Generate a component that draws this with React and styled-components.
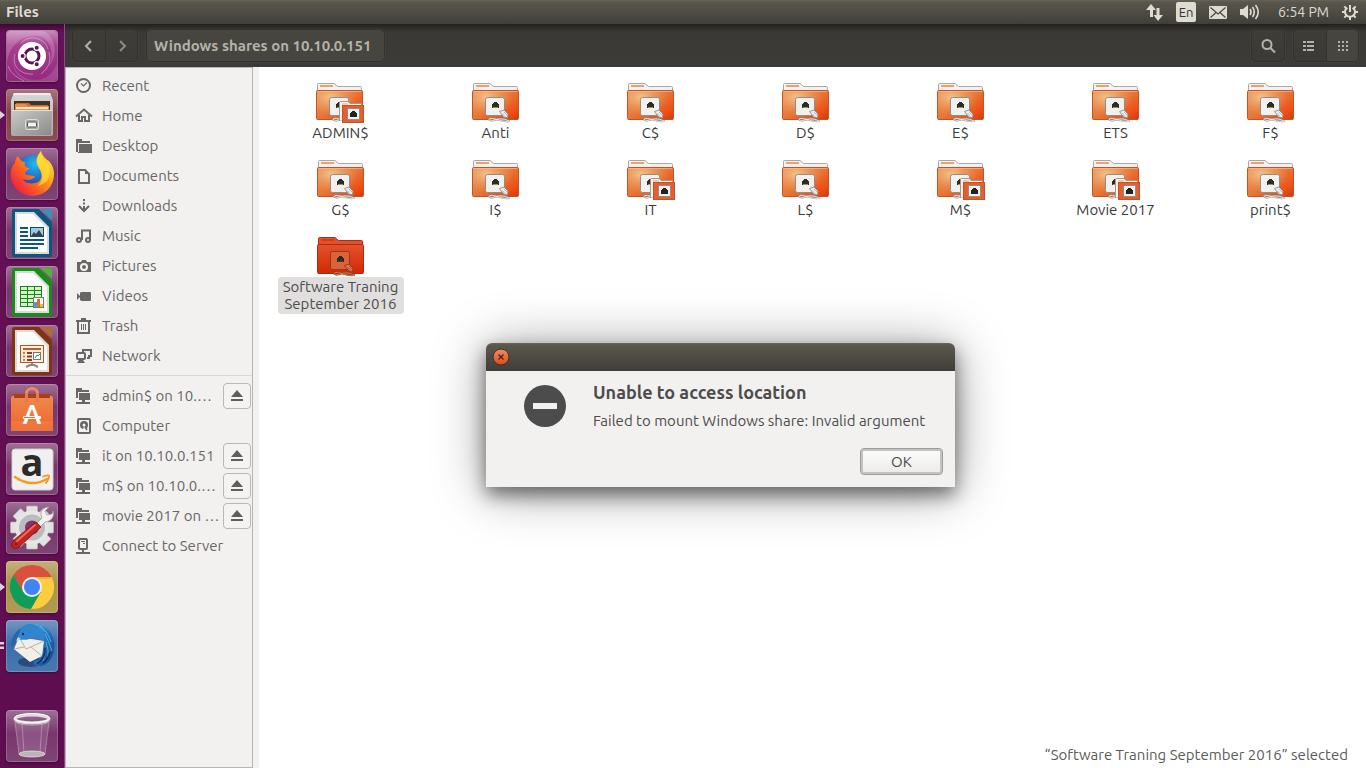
import React from "react";
import styled, { createGlobalStyle, css } from "styled-components";

const GlobalStyle = createGlobalStyle`
  *, *::before, *::after { box-sizing: border-box; }
  body { margin: 0; background: #fff; }
  body, button { font-family: Ubuntu, "Noto Sans", "Open Sans", sans-serif; font-size: 15px; line-height: 18px; }
  button { margin: 0; padding: 0; border: 0; background: none; color: inherit; cursor: pointer; }
  ul { margin: 0; padding: 0; list-style: none; }
  h1, h2, p { margin: 0; }
  svg { display: block; flex: none; overflow: visible; }
`;

/* ---------- shell ---------- */

const Desktop = styled.div`
  display: flex;
  flex-direction: column;
  min-height: 100vh;
`;

const Panel = styled.header`
  display: flex;
  align-items: center;
  height: 24px;
  padding: 0 8px 0 6px;
  color: #dfdbd2;
  background: linear-gradient(#67655a 0, #5a574d 2px, #3f3e39 100%);
`;

const AppName = styled.h1`
  font-size: 15px;
  line-height: 18px;
  font-weight: 700;
`;

const Indicators = styled.div`
  display: flex;
  align-items: center;
  gap: 13px;
  margin-left: auto;
`;

const Indicator = styled.button`
  display: flex;
  align-items: center;
`;

const Clock = styled.button`
  padding: 0 0 0 5px;
  font-size: 14px;
`;

const Keyboard = styled.button`
  width: 20px;
  height: 20px;
  border-radius: 2px;
  background: #dfdbd2;
  color: #33322d;
  font-size: 13px;
`;

const Workspace = styled.div`
  display: flex;
  flex: 1;
`;

/* ---------- launcher ---------- */

const Launcher = styled.nav`
  display: flex;
  flex-direction: column;
  gap: 7px;
  flex: none;
  width: 65px;
  padding: 6px 0 6px 6px;
  border-right: 1px solid #8c4c82;
  background: linear-gradient(#3b0a31 0, #65115a 8px, #620f52 60%, #5d0e4e 100%);
`;

const Tile = styled.button`
  position: relative;
  width: 52px;
  height: 52px;
  border-radius: 4px;
  margin-top: ${(p) => (p.$last ? "auto" : "0")};
  background: linear-gradient(rgba(255, 255, 255, 0.34), rgba(255, 255, 255, 0.08) 45%, rgba(255, 255, 255, 0.14)),
    ${(p) => p.$tint || "#6d2560"};
  box-shadow: inset 0 0 0 1px rgba(255, 255, 255, 0.2), 0 1px 2px rgba(0, 0, 0, 0.35);
`;

const RunningMark = styled.svg`
  position: absolute;
  left: -6px;
  top: 20px;
`;

/* ---------- file window ---------- */

const Window = styled.main`
  display: flex;
  flex-direction: column;
  flex: 1;
  min-width: 0;
`;

const Toolbar = styled.div`
  display: flex;
  align-items: center;
  height: 43px;
  padding: 0 7px;
  color: #b5b2a9;
  background: linear-gradient(#22211e 0, #3a3935 8px, #3c3b37 100%);
`;

const ButtonGroup = styled.div`
  display: flex;
  height: 33px;
  margin: 0 ${(p) => p.$after || 0} 0 ${(p) => p.$before || 0};
  border: 1px solid #33322e;
  border-radius: 5px;
  box-shadow: 0 0 0 1px rgba(255, 255, 255, 0.03);
  background: ${(p) => (p.$raised ? "#46453f" : "linear-gradient(#3e3d38, #3b3a36)")};
`;

const ToolButton = styled.button`
  display: grid;
  place-items: center;
  width: 32px;
  border-radius: 4px;
  & + & { border-left: 1px solid #34332f; border-radius: 0 4px 4px 0; }
  ${(p) => p.$active && css`background: #46453f;`}
  ${(p) => p.$dim && css`color: #8e8c84;`}
`;

const PathButton = styled.button`
  min-width: 237px;
  padding: 0 7px;
  font-weight: 700;
  text-align: left;
  white-space: nowrap;
`;

const Body = styled.div`
  display: flex;
  flex: 1;
`;

const Sidebar = styled.aside`
  flex: none;
  width: 188px;
  padding-top: 3px;
  border: 1px solid #b8b5b1;
  background: #f2f1f0;
`;

const PlaceList = styled.ul`
  & + & {
    margin-top: 4px;
    padding-top: 5px;
    border-top: 1px solid #dad8d5;
  }
`;

const PlaceRow = styled.li`
  display: flex;
  align-items: center;
  height: 30px;
  padding: 0 1px 0 10px;
`;

const PlaceLink = styled.a`
  display: flex;
  align-items: center;
  gap: 10px;
  flex: 1;
  min-width: 0;
  color: #686764;
  text-decoration: none;
  white-space: nowrap;
`;

const EjectButton = styled.button`
  display: grid;
  place-items: center;
  flex: none;
  width: 28px;
  height: 26px;
  border: 1px solid #bab8b4;
  border-radius: 4px;
  background: #f4f3f2;
  color: #5f5e5b;
`;

const Gutter = styled.div`
  flex: none;
  width: 6px;
  background: #f2f1f0;
`;

const Content = styled.section`
  position: relative;
  display: flex;
  flex-direction: column;
  flex: 1;
  min-width: 0;
  padding: 15px 18px 4px 4px;
  background: #fff;
`;

const ShareGrid = styled.ul`
  display: grid;
  grid-template-columns: repeat(7, 1fr);
  grid-auto-rows: 77px;
`;

const Share = styled.li`
  display: flex;
  justify-content: center;
  align-items: flex-start;
`;

const ShareButton = styled.button`
  display: flex;
  flex-direction: column;
  align-items: center;
`;

const ShareName = styled.span`
  max-width: 126px;
  padding: 1px 4px 2px;
  border-radius: 4px;
  line-height: 17px;
  color: ${(p) => (p.$selected ? "#4c4c4c" : "#3a3a3a")};
  background: ${(p) => (p.$selected ? "#e0dfde" : "transparent")};
`;

const Status = styled.p`
  margin-top: auto;
  text-align: right;
  color: #5c5b58;
`;

/* ---------- dialog ---------- */

const Dialog = styled.div`
  position: absolute;
  top: 276px;
  left: 227px;
  width: 469px;
  border-radius: 6px 6px 0 0;
  color: #4c4c4c;
  background: #f2f1f0;
  box-shadow: 0 8px 18px rgba(0, 0, 0, 0.48), 0 4px 52px rgba(0, 0, 0, 0.4);
`;

const TitleBar = styled.div`
  display: flex;
  align-items: center;
  height: 28px;
  padding-left: 6px;
  border-radius: 6px 6px 0 0;
  background: linear-gradient(#6a685d 0, #5a574d 2px, #3f3e39 100%);
`;

const Message = styled.div`
  display: grid;
  grid-template-columns: 42px 1fr;
  column-gap: 27px;
  padding: 12px 12px 0 38px;
`;

const MessageTitle = styled.h2`
  font-size: 18px;
  line-height: 18px;
  font-weight: 700;
`;

const MessageText = styled.p`
  margin-top: 11px;
  white-space: nowrap;
`;

const Actions = styled.div`
  display: flex;
  justify-content: flex-end;
  padding: 18px 12px 12px;
`;

const OkButton = styled.button`
  width: 83px;
  height: 27px;
  border: 1px solid #9f9d99;
  border-radius: 4px;
  background: linear-gradient(#fdfdfd, #ebeae8);
  box-shadow: inset 0 0 0 2px #c4c3c0;
`;

/* ---------- launcher artwork ---------- */

const Art = ({ children }) => (
  <svg width="52" height="52" viewBox="0 0 52 52" fill="none" aria-hidden="true">{children}</svg>
);

const DashArt = () => (
  <Art>
    <defs>
      <linearGradient id="dash" x1="0" y1="0" x2="0" y2="1">
        <stop offset="0" stopColor="#c888b8" /><stop offset=".3" stopColor="#a63f90" /><stop offset="1" stopColor="#95287f" />
      </linearGradient>
    </defs>
    <rect x="1" y="1" width="50" height="50" rx="3" fill="url(#dash)" />
    <path d="M1 34C2 14 20 2 36 7C46 12 49 28 42 38C53 25 50 8 38 1H4Q1 1 1 4Z" fill="#fff" opacity=".18" />
    <path d="M8 30C6 42 20 53 36 49Q46 46 51 34V48Q51 51 48 51H20C10 46 6 38 8 30Z" fill="#fff" opacity=".13" />
    <path d="M15 13C25 3 39 9 42 19M9 24C5 37 16 45 27 44M2 36Q5 45 18 51M43 22Q47 35 35 44" stroke="#f2d6ea" strokeWidth="1" opacity=".45" />
    <circle cx="26" cy="26" r="14" fill="#fff" />
    <circle cx="26" cy="26" r="7" stroke="#5e1350" strokeWidth="3" />
    <g fill="#5e1350" stroke="#fff" strokeWidth="1.2">
      <circle cx="16.6" cy="26" r="2.6" /><circle cx="30.7" cy="17.8" r="2.6" /><circle cx="30.7" cy="34.2" r="2.6" />
    </g>
  </Art>
);

const FilesArt = () => (
  <Art>
    <defs>
      <linearGradient id="cabTop" x1="0" y1="0" x2="0" y2="1"><stop offset="0" stopColor="#d7d7d5" /><stop offset="1" stopColor="#a9a9a7" /></linearGradient>
      <linearGradient id="cabFront" x1="0" y1="0" x2="1" y2="1"><stop offset="0" stopColor="#c9c9c7" /><stop offset="1" stopColor="#8b8b89" /></linearGradient>
    </defs>
    <path d="M8 4H44L47 11V45Q47 47 45 47H7Q5 47 5 45V11Z" fill="url(#cabTop)" />
    <path d="M8 4H44L45 6H7Z" fill="#eee" />
    <rect x="8" y="12" width="36" height="12" fill="#3a3532" />
    <path d="M10 14H23L25 16H42V24H10Z" fill="#d8631c" />
    <path d="M9 15H20L22 17H43V24H9Z" fill="#f08a3c" />
    <rect x="10" y="18" width="32" height="2" fill="#fbe9d6" />
    <path d="M6 21H46V24L45 46H7L6 24Z" fill="url(#cabFront)" />
    <path d="M6 21.500H46" stroke="#e4e4e2" />
    <rect x="19.500" y="30.500" width="13" height="10" rx="2" fill="#a7a7a5" stroke="#dededc" />
    <rect x="21.500" y="33" width="9" height="5" rx="1" fill="#f3f3f1" stroke="#555" />
  </Art>
);

const FirefoxArt = () => (
  <Art>
    <defs>
      <linearGradient id="ffBody" x1="1" y1="0" x2="0.1" y2="0.8">
        <stop offset="0" stopColor="#fff44f" /><stop offset=".35" stopColor="#ffb41c" /><stop offset=".65" stopColor="#ff6a1f" /><stop offset="1" stopColor="#f0243f" />
      </linearGradient>
      <radialGradient id="ffGlobe" cx=".6" cy=".3" r=".8"><stop offset="0" stopColor="#25b8f6" /><stop offset="1" stopColor="#1b3fa5" /></radialGradient>
    </defs>
    <circle cx="26" cy="22" r="15" fill="url(#ffGlobe)" />
    <path d="M35 3C31 8 29 14 33 20C36 25 37 31 32 34C26 37 18 35 17 31C21 33 26 32 29 29C28 27 22 28 19 26C18 24 22 22 24 20C20 20 18 18 19 14C16 14 14 12 12 8C10 10 9 12 9 15C4 20 3 28 7 36C12 45 20 48 27 48C40 47 48 38 48 26C48 19 45 16 43 13C41 12 36 8 35 3Z" fill="url(#ffBody)" />
    <path d="M35 3C30 9 29 14 33 20C38 26 37 34 31 38C41 37 46 28 43 18C40 14 35 9 35 3Z" fill="#ffe63a" opacity=".7" />
  </Art>
);

const OfficeArt = ({ frame, light, children }) => (
  <Art>
    <path d="M8 2H33L46 15V48Q46 50 44 50H8Q6 50 6 48V4Q6 2 8 2Z" fill={frame} />
    <path d="M35 2H44Q46 2 46 4V13Z" fill={light} />
    <path d="M9 5H28L43 20V47H9Z" fill="#d9dadb" />
    <path d="M11 7H27L41 21V45H11Z" fill="#fbfbfa" />
    {children}
  </Art>
);

const WriterArt = () => (
  <OfficeArt frame="#0d5680" light="#3b8fb9">
    <path d="M14 21H22M14 25H22M14 29H22M14 33H38M14 37H38M14 41H32" stroke="#0b5684" strokeWidth="2" />
    <rect x="24.500" y="20.500" width="13" height="9" fill="#9dcbe6" stroke="#0d4a70" />
    <path d="M25 29L28 25L30 27L33 23L37 29Z" fill="#35434a" /><circle cx="35" cy="23" r="1" fill="#f4c542" />
  </OfficeArt>
);

const CalcArt = () => (
  <OfficeArt frame="#178e15" light="#52b13f">
    <rect x="14" y="20" width="22" height="21" fill="#18841a" />
    <g fill="#d3f5c6">
      {[0, 1, 2, 3, 4].map((r) => [0, 1, 2].map((c) => (
        <rect key={`${r}-${c}`} x={15 + c * 7} y={21 + r * 4} width="6" height="3" />
      )))}
    </g>
    <rect x="27.500" y="31.500" width="10" height="10" fill="#fff" stroke="#777" />
    <path d="M28 36H31V41H28Z" fill="#3da3dd" /><path d="M31 33H34V41H31Z" fill="#e66a24" /><path d="M34 38H37V41H34Z" fill="#eec31d" />
  </OfficeArt>
);

const ImpressArt = () => (
  <OfficeArt frame="#843310" light="#b46a35">
    <rect x="14.500" y="20.500" width="23" height="17" fill="#fbeee4" stroke="#bd5319" />
    <path d="M17 24H35" stroke="#c65c1e" strokeWidth="2" />
    <path d="M17 28H19M17 31.500H19M17 35H19" stroke="#e07d3c" strokeWidth="2" />
    <path d="M21 28H26M21 31.500H26M21 35H26" stroke="#913c11" strokeWidth="2" />
    <rect x="27.500" y="27.500" width="7" height="7" fill="#fff" stroke="#777" />
    <path d="M29 33L31 30L32 31L34 29" stroke="#31962f" />
    <path d="M26 38V41M26 39L20 42M26 39L32 42" stroke="#8a8a8a" strokeWidth="2" />
  </OfficeArt>
);

const SoftwareArt = () => (
  <Art>
    <defs><linearGradient id="bag" x1="0" y1="0" x2="0" y2="1"><stop offset="0" stopColor="#ef8a4f" /><stop offset="1" stopColor="#ef6425" /></linearGradient></defs>
    <path d="M7 10H45L47 13V17H5V13Z" fill="#a93f18" />
    <path d="M5 13L8 11V14H44V11L47 13V47H5Z" fill="url(#bag)" />
    <path d="M5 37H47V47H5Z" fill="#fff" opacity=".08" />
    <path d="M20.500 18V10Q20.500 5 26 5Q31.500 5 31.500 10V18" stroke="#e7794e" strokeWidth="3" />
    <path d="M20 9Q21 4 26 4Q31 4 32 9" stroke="#f6a37f" strokeWidth="1" />
    <text x="26" y="40" textAnchor="middle" fontFamily="Lato, sans-serif" fontWeight="700" fontSize="26" fill="#fff">A</text>
    <rect x="17" y="32" width="18" height="3" rx="1" fill="#fff" /><rect x="18" y="33" width="11" height="1" fill="#ef6a2a" />
  </Art>
);

const AmazonArt = () => (
  <Art>
    <rect x="6" y="6" width="41" height="41" rx="3" fill="#f0f0f0" stroke="#cfcfcf" />
    <text x="26" y="33" textAnchor="middle" fontFamily="Open Sans, sans-serif" fontWeight="700" fontSize="38" fill="#2b2b2b">a</text>
    <path d="M9 34Q25 45 41 36" stroke="#f79a1c" strokeWidth="2.500" strokeLinecap="round" />
    <path d="M37 33.500Q44 31 43 34Q42 38 40 40" stroke="#f79a1c" strokeWidth="1.800" strokeLinecap="round" />
  </Art>
);

const SettingsArt = () => (
  <Art>
    {[0, 45, 90, 135].map((a) => (
      <rect key={a} x="20.500" y="4" width="11" height="43" rx="1" fill="#e2e2e1" stroke="#b3b3b2" strokeWidth=".7" transform={`rotate(${a} 26 25.500)`} />
    ))}
    <circle cx="26" cy="25.500" r="17" fill="#e6e6e5" />
    <circle cx="26" cy="25.500" r="13" fill="#bdbcbc" />
    <circle cx="26" cy="25.500" r="7" fill="#7b3570" />
    <path d="M30 22L36 16C33 10 37 5 43 5L39 9L41 13L46 12L47 9C49 14 45 20 39 20L33 26Z" fill="#f1f1f0" stroke="#9c9c9b" strokeWidth=".8" />
    <path d="M30 20L35 25L13 45Q9 48 6 45Q4 42 8 38Z" fill="#c8241f" stroke="#80100f" strokeWidth=".8" />
    <path d="M29 23L11 39" stroke="#f06a60" strokeWidth="2" strokeLinecap="round" />
    <circle cx="10" cy="42" r="1.500" fill="#7a2620" />
  </Art>
);

const ChromeArt = () => (
  <Art>
    <path d="M7.500 14A22 22 0 0 1 45.600 16H26L17.300 31Z" fill="#db4f3f" />
    <path d="M45.600 16A22 22 0 0 1 24.900 48L34.700 31L26 16Z" fill="#fecd3e" />
    <path d="M24.900 48A22 22 0 0 1 7.500 14L17.300 31H34.700Z" fill="#109d59" />
    <path d="M26 16H45.600L44 18H30Z" fill="#c58f1c" opacity=".35" />
    <circle cx="26" cy="26" r="10" fill="#f1f1f1" /><circle cx="26" cy="26" r="8" fill="#4384f3" />
  </Art>
);

const ThunderbirdArt = () => (
  <Art>
    <defs><linearGradient id="tb" x1="0" y1="0" x2="1" y2="1"><stop offset="0" stopColor="#5fb2e9" /><stop offset=".5" stopColor="#1f73bd" /><stop offset="1" stopColor="#123d7c" /></linearGradient></defs>
    <ellipse cx="25" cy="42" rx="13" ry="5" fill="#123256" opacity=".6" />
    <path d="M30 4C42 5 50 16 48 29C47 40 40 46 33 46C28 46 27 44 28 41C33 40 36 37 37 32L38 22L26 8Z" fill="url(#tb)" />
    <path d="M8 29L13 17L38 21L36 36L24 42Z" fill="#f2efe9" />
    <path d="M13 17L20 29L38 21M8 29L18 27M36 36L25 27" stroke="#b8b2a8" strokeWidth="1" />
    <path d="M12 20C10 11 15 5 23 4C31 3 38 9 39 22C34 17 29 16 25 18C21 21 16 19 12 20Z" fill="#2f86cf" />
    <path d="M6 29C4 20 8 12 15 8C13 13 12 16 11 20C9 23 7 26 6 29Z" fill="#2567ab" />
    <path d="M34 6Q42 12 45 22M39 14Q43 22 46 31M40 22Q43 30 42 38M39 28Q40 34 37 41" stroke="#79bff0" strokeWidth="1" opacity=".7" />
    <path d="M39 28Q40 38 31 44M44 32Q42 40 37 43" stroke="#0f2f63" strokeWidth="1.500" />
    <circle cx="17" cy="14" r="1.200" fill="#0e2c52" /><path d="M12 17L10 21L15 19Z" fill="#cfd5da" />
  </Art>
);

const TrashArt = () => (
  <Art>
    <path d="M9 11L13 44Q26 50 39 44L43 11Q26 17 9 11Z" fill="#fff" opacity=".14" />
    <path d="M9 12L13 44M43 12L39 44M16 14L18 43M36 14L34 43" stroke="#fff" strokeWidth="1" opacity=".3" />
    <ellipse cx="26" cy="44" rx="13" ry="3" fill="#b9b7b6" stroke="#e9e8e7" strokeWidth=".7" />
    <ellipse cx="26" cy="9" rx="17" ry="4" stroke="#dddcdb" strokeWidth="3" />
    <ellipse cx="26" cy="8" rx="17.500" ry="4.500" stroke="#fff" strokeWidth="1" />
    <path d="M8 10Q9 15 26 15Q43 15 44 10" stroke="#a9a8a7" strokeWidth="1" />
  </Art>
);

/* ---------- symbolic icons, drawn on a 16px grid ---------- */

const Glyph = ({ children }) => (
  <svg width="16" height="16" viewBox="0 0 16 16" fill="none" stroke="none" aria-hidden="true">{children}</svg>
);

const line = { stroke: "currentColor", strokeWidth: 2 };
const fill = { fill: "currentColor" };

const glyphs = {
  recent: <><circle cx="7.500" cy="7.500" r="6.500" {...line} /><path d="M5 5.500L7.500 8L11 4.500" stroke="currentColor" strokeWidth="1.200" /></>,
  home: <><path d="M0 8.500L8 1.500L16 8.500" {...line} /><path d="M3 7V13H6V9H9V13H13V7" {...line} /></>,
  desktop: <path d="M0 1H6V3H14V5H2V14H0ZM3 6H16V15H2V14H3Z" {...fill} />,
  documents: <><path d="M3 2H9L13 6V15H3Z" {...line} /><path d="M9 2V6H13Z" {...fill} /></>,
  downloads: <><path d="M7 1H9V3H7ZM7 4.500H9V6.500H7Z" {...fill} /><path d="M8 8V13M3 8L8 13L13 8" {...line} /></>,
  music: <><circle cx="3" cy="12" r="2" {...line} /><circle cx="12" cy="12" r="2" {...line} /><path d="M6 12V2.500H14V12" {...line} /></>,
  pictures: <path fillRule="evenodd" d="M1 4H5L6 2H10L11 4H15V14H1ZM8 5A4 4 0 1 0 8 13A4 4 0 1 0 8 5ZM8 7A2 2 0 1 1 8 11A2 2 0 1 1 8 7Z" {...fill} />,
  videos: <path d="M1 5L4 8V5Q4 4 6 4H14Q15 4 15 5V12Q15 13 14 13H6Q5 13 4 12V9L1 12Z" {...fill} />,
  trash: <><path d="M0 3H15M5 1H10M2 4V15H13V4" {...line} /><path d="M5.500 6V12M7.500 6V12M9.500 6V12" stroke="currentColor" /></>,
  network: <><path d="M7 4V2H15V8H12" {...line} /><rect x="1" y="5" width="8" height="6" rx="1" {...line} /><path d="M3 12H7L9 15H1ZM11 9H14V11H11Z" {...fill} /></>,
  remote: <path d="M0 0H6V2H13V4H2V10H0ZM3 5H14V12H3ZM6 12H9V14H14V16H0V14H6Z" {...fill} />,
  computer: <><rect x="2" y="1" width="12" height="14" rx="1" {...line} /><circle cx="8" cy="7" r="4" {...fill} /><circle cx="8" cy="7" r="1.500" fill="#f2f1f0" /><path d="M8 8L11 12H7Z" fill="#f2f1f0" /><path d="M9 9L11 12" stroke="currentColor" strokeWidth="1.500" /></>,
  server: <><rect x="3" y="1" width="8" height="10" rx="1" {...line} /><path d="M5 3.500H9M7 5.500H9" stroke="currentColor" /><path d="M6 12H8V14H14V16H0V14H6Z" {...fill} /></>,
  eject: <path d="M8 2L14 9H2ZM2 11H14V13H2Z" {...fill} />,
  back: <path d="M10 3L5 8L10 13" {...line} />,
  forward: <path d="M6 3L11 8L6 13" {...line} />,
  search: <><circle cx="7" cy="6.500" r="4.500" {...line} /><path d="M10 9.500L15 14.500" {...line} /></>,
  list: <path d="M1 3H4V5H1ZM1 7H4V9H1ZM1 11H4V13H1ZM5 3H12V5H5ZM5 7H12V9H5ZM5 11H12V13H5Z" {...fill} />,
  icons: <path d="M3 3h2v2H3zM7 3h2v2H7zM11 3h2v2h-2zM3 7h2v2H3zM7 7h2v2H7zM11 7h2v2h-2zM3 11h2v2H3zM7 11h2v2H7zM11 11h2v2h-2z" {...fill} />,
};

const Traffic = () => (
  <svg width="17" height="17" viewBox="0 0 17 17" fill="currentColor" aria-hidden="true">
    <path d="M5 0L10 6H7V13H4V6H0ZM12 17L7.500 11H10.500V4H13.500V11H17Z" />
  </svg>
);
const Mail = () => (
  <svg width="18" height="13" viewBox="0 0 18 13" aria-hidden="true">
    <rect width="18" height="13" rx="1" fill="currentColor" />
    <path d="M1.500 1.500L9 8L16.500 1.500M1.500 11.500L7 6.500M16.500 11.500L11 6.500" fill="none" stroke="#4a4841" strokeWidth="1.200" />
  </svg>
);
const Volume = () => (
  <svg width="20" height="16" viewBox="0 0 20 16" fill="none" aria-hidden="true">
    <path d="M0 5H3L8 1V15L3 11H0Z" fill="currentColor" />
    <path d="M10 5Q12 8 10 11M12.500 3Q16 8 12.500 13M15.500 1Q21 8 15.500 15" stroke="currentColor" strokeWidth="1.600" />
  </svg>
);
const Session = () => (
  <svg width="16" height="16" viewBox="0 0 16 16" fill="none" aria-hidden="true">
    {[45, 90, 135, 180, 225, 270, 315].map((a) => (
      <rect key={a} x="7" y="0" width="2" height="4" fill="currentColor" transform={`rotate(${a} 8 8)`} />
    ))}
    <path d="M5 3.700A5 5 0 1 0 11 3.700" {...line} />
    <path d="M8 1V8" {...line} />
  </svg>
);

/* ---------- share folder ---------- */

const ShareFolder = ({ stacked, selected }) => {
  const edge = selected ? "#a3331a" : "#a9a8a6";
  const paper = selected ? "#e0512c" : "#f3f2f1";
  const plate = selected ? "#dd6238" : "#f0f1ee";
  const wire = selected ? "#8d3a20" : "#8f8f8d";
  return (
    <svg width="48" height="41" viewBox="0 0 48 41" fill="none" aria-hidden="true">
      <defs>
        <linearGradient id="shareFront" x1="0" y1="0" x2="1" y2="1">
          <stop offset="0" stopColor="#e98f55" /><stop offset=".45" stopColor="#e67a3c" /><stop offset=".8" stopColor="#ee4f15" /><stop offset="1" stopColor="#cf3a0c" />
        </linearGradient>
        <radialGradient id="shareGlow" cx=".3" cy=".25" r=".6">
          <stop offset="0" stopColor="#f7d9a0" stopOpacity=".75" /><stop offset="1" stopColor="#f0a060" stopOpacity="0" />
        </radialGradient>
        <linearGradient id="sharePicked" x1="0" y1="0" x2="0" y2="1">
          <stop offset="0" stopColor="#e2532b" /><stop offset="1" stopColor="#d42604" />
        </linearGradient>
      </defs>
      <path d="M1.500 9V2.500Q1.500 1.500 2.500 1.500H18L21.500 4.500H44.500Q45.500 4.500 45.500 5.500V9" fill={paper} stroke={edge} />
      <path d="M4 4H17" stroke={selected ? "#d43c18" : "#efa06f"} strokeWidth="2" />
      <rect x="1" y="8" width="45" height="30" rx="1" fill={selected ? "url(#sharePicked)" : "url(#shareFront)"} />
      {!selected && <rect x="1" y="8" width="45" height="30" fill="url(#shareGlow)" />}
      <rect x=".5" y="8.500" width="46" height="29" rx="1" stroke={selected ? "#b02a0b" : "#c5532a"} />
      {!selected && <path d="M2 9.500H45" stroke="#f6c3a0" opacity=".6" />}
      <rect x="13.500" y="15.500" width="19" height="18" rx="2" fill={plate} stroke={selected ? "#93391d" : "#8f8d89"} />
      <path d="M20 22H21V21H22V20H25V21H26V22H27V26H20Z" fill="#2b2b28" />
      <path d="M21 25.500H26" stroke={selected ? "#7d2a10" : "#a99a28"} />
      <path d="M38 39C30 41 25 36 18 36.500C16 37.500 18 39 21 38.500C27 36.500 31 36 37 39" stroke={wire} strokeWidth="1.800" />
      <path d="M38 39C30 41 25 36 18 36.500C16 37.500 18 39 21 38.500C27 36.500 31 36 37 39" stroke={selected ? "#d98660" : "#f2f2f0"} strokeWidth=".8" />
      <path d="M27.500 29.500L32 28L36 32L35.500 36L31.500 35Z" fill={selected ? "#d9744e" : "#ececea"} stroke={wire} strokeWidth=".9" />
      <path d="M30 31.500L33 34.500M32 30L35 33" stroke={wire} strokeWidth=".6" />
      {stacked && (
        <g>
          <path d="M23.500 39V20.500Q23.500 19.500 24.500 19.500H32L34 21.500H45.500V24" fill="#f6f3f1" stroke="#b98f80" />
          <path d="M26 22H32" stroke="#efa06f" />
          <path d="M26 23H48V41H26Z" fill="#e2602b" />
          <path d="M26.500 40.500V23.500H47.500V40.500Z" stroke="#c5522a" />
          <rect x="31.500" y="26.500" width="12" height="11" fill="#eef0ef" stroke="#9d8a82" />
          <path d="M34 31H35V30H36V29H39V30H40V31H41V35H34Z" fill="#22221f" />
        </g>
      )}
    </svg>
  );
};

/* ---------- data ---------- */

const launcherItems = [
  { name: "Search your computer", Icon: DashArt },
  { name: "Files", Icon: FilesArt, tint: "#7a3038", mark: "arrow" },
  { name: "Firefox", Icon: FirefoxArt },
  { name: "LibreOffice Writer", Icon: WriterArt },
  { name: "LibreOffice Calc", Icon: CalcArt },
  { name: "LibreOffice Impress", Icon: ImpressArt },
  { name: "Ubuntu Software", Icon: SoftwareArt },
  { name: "Amazon", Icon: AmazonArt },
  { name: "System Settings", Icon: SettingsArt },
  { name: "Google Chrome", Icon: ChromeArt, tint: "#a58a38", mark: "arrow" },
  { name: "Thunderbird Mail", Icon: ThunderbirdArt, tint: "#2c62a4", mark: "bars" },
  { name: "Trash", Icon: TrashArt, last: true },
];

const places = [
  ["Recent", "recent"], ["Home", "home"], ["Desktop", "desktop"], ["Documents", "documents"], ["Downloads", "downloads"],
  ["Music", "music"], ["Pictures", "pictures"], ["Videos", "videos"], ["Trash", "trash"], ["Network", "network"],
];

const devices = [
  ["admin$ on 10.…", "remote", true],
  ["Computer", "computer"],
  ["it on 10.10.0.151", "remote", true],
  ["m$ on 10.10.0.…", "remote", true],
  ["movie 2017 on …", "remote", true],
  ["Connect to Server", "server"],
];

const shares = [
  { name: "ADMIN$", stacked: true }, { name: "Anti" }, { name: "C$" }, { name: "D$" }, { name: "E$" }, { name: "ETS" }, { name: "F$" },
  { name: "G$" }, { name: "I$" }, { name: "IT", stacked: true }, { name: "L$" }, { name: "M$", stacked: true },
  { name: "Movie 2017", stacked: true }, { name: "print$" },
  { name: "Software Traning September 2016", selected: true },
];

const Places = ({ items }) => (
  <PlaceList>
    {items.map(([name, icon, ejectable]) => (
      <PlaceRow key={name}>
        <PlaceLink href="#">
          <Glyph>{glyphs[icon]}</Glyph>
          <span>{name}</span>
        </PlaceLink>
        {ejectable && <EjectButton aria-label={`Eject ${name}`}><Glyph>{glyphs.eject}</Glyph></EjectButton>}
      </PlaceRow>
    ))}
  </PlaceList>
);

const ErrorDialog = () => (
  <Dialog role="alertdialog" aria-labelledby="error-title" aria-describedby="error-text">
    <TitleBar>
      <button aria-label="Close">
        <svg width="18" height="18" viewBox="0 0 18 18" fill="none" aria-hidden="true">
          <defs><linearGradient id="close" x1="0" y1="0" x2="0" y2="1"><stop offset="0" stopColor="#f58a63" /><stop offset="1" stopColor="#df4a16" /></linearGradient></defs>
          <circle cx="9" cy="9" r="8" fill="url(#close)" stroke="#36342f" />
          <path d="M6.500 6.500L11.500 11.500M11.500 6.500L6.500 11.500" stroke="#46261a" strokeWidth="1.300" />
        </svg>
      </button>
    </TitleBar>
    <Message>
      <svg width="42" height="44" viewBox="0 0 42 44" aria-hidden="true">
        <circle cx="21" cy="23" r="21" fill="#4c4c4c" />
        <rect x="9" y="20" width="24" height="6" fill="#f2f1f0" />
      </svg>
      <div>
        <MessageTitle id="error-title">Unable to access location</MessageTitle>
        <MessageText id="error-text">Failed to mount Windows share: Invalid argument</MessageText>
      </div>
    </Message>
    <Actions><OkButton>OK</OkButton></Actions>
  </Dialog>
);

export default function App() {
  return (
    <Desktop>
      <GlobalStyle />
      <Panel>
        <AppName>Files</AppName>
        <Indicators>
          <Indicator aria-label="Network"><Traffic /></Indicator>
          <Keyboard>En</Keyboard>
          <Indicator aria-label="Messages"><Mail /></Indicator>
          <Indicator aria-label="Sound"><Volume /></Indicator>
          <Clock>6:54 PM</Clock>
          <Indicator aria-label="Session"><Session /></Indicator>
        </Indicators>
      </Panel>
      <Workspace>
        <Launcher aria-label="Launcher">
          {launcherItems.map(({ name, Icon, tint, mark, last }) => (
            <Tile key={name} aria-label={name} $tint={tint} $last={last}>
              <Icon />
              {mark && (
                <RunningMark width="5" height="12" viewBox="0 0 5 12" fill="#dcd3da" aria-hidden="true">
                  {mark === "arrow" ? <path d="M0 2L5 6L0 10Z" /> : <path d="M0 2H4V4.500H0ZM0 6.500H4V9H0Z" />}
                </RunningMark>
              )}
            </Tile>
          ))}
        </Launcher>
        <Window>
          <Toolbar>
            <ButtonGroup $after="8px">
              <ToolButton aria-label="Back"><Glyph>{glyphs.back}</Glyph></ToolButton>
              <ToolButton aria-label="Forward" $dim><Glyph>{glyphs.forward}</Glyph></ToolButton>
            </ButtonGroup>
            <ButtonGroup $raised>
              <PathButton>Windows shares on 10.10.0.151</PathButton>
            </ButtonGroup>
            <ButtonGroup $before="auto" $after="8px">
              <ToolButton aria-label="Search"><Glyph>{glyphs.search}</Glyph></ToolButton>
            </ButtonGroup>
            <ButtonGroup>
              <ToolButton aria-label="List view"><Glyph>{glyphs.list}</Glyph></ToolButton>
              <ToolButton aria-label="Icon view" $active><Glyph>{glyphs.icons}</Glyph></ToolButton>
            </ButtonGroup>
          </Toolbar>
          <Body>
            <Sidebar aria-label="Places">
              <Places items={places} />
              <Places items={devices} />
            </Sidebar>
            <Gutter />
            <Content>
              <ShareGrid>
                {shares.map((s) => (
                  <Share key={s.name}>
                    <ShareButton>
                      <ShareFolder stacked={s.stacked} selected={s.selected} />
                      <ShareName $selected={s.selected}>{s.name}</ShareName>
                    </ShareButton>
                  </Share>
                ))}
              </ShareGrid>
              <Status>“Software Traning September 2016” selected</Status>
              <ErrorDialog />
            </Content>
          </Body>
        </Window>
      </Workspace>
    </Desktop>
  );
}
